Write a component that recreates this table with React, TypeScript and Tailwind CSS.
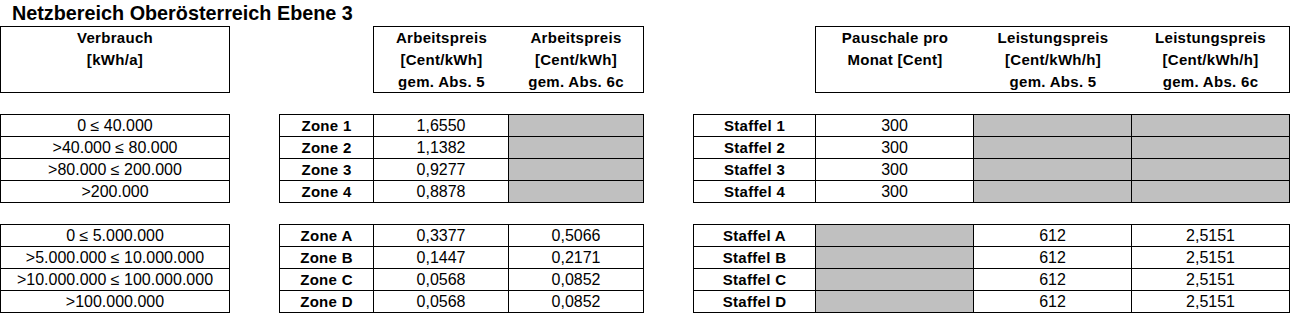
import React from 'react';

type Cell = { text?: string; bold?: boolean; gray?: boolean };

const GRAY = 'bg-[#c0c0c0]';

const groups = [
  {
    usage: ['0 ≤ 40.000', '>40.000 ≤ 80.000', '>80.000 ≤ 200.000', '>200.000'],
    zones: ['Zone 1', 'Zone 2', 'Zone 3', 'Zone 4'],
    work5: ['1,6550', '1,1382', '0,9277', '0,8878'],
    work6c: [null, null, null, null],
    staffel: ['Staffel 1', 'Staffel 2', 'Staffel 3', 'Staffel 4'],
    flat: ['300', '300', '300', '300'],
    power5: [null, null, null, null],
    power6c: [null, null, null, null],
  },
  {
    usage: ['0 ≤ 5.000.000', '>5.000.000 ≤ 10.000.000', '>10.000.000 ≤ 100.000.000', '>100.000.000'],
    zones: ['Zone A', 'Zone B', 'Zone C', 'Zone D'],
    work5: ['0,3377', '0,1447', '0,0568', '0,0568'],
    work6c: ['0,5066', '0,2171', '0,0852', '0,0852'],
    staffel: ['Staffel A', 'Staffel B', 'Staffel C', 'Staffel D'],
    flat: [null, null, null, null],
    power5: ['612', '612', '612', '612'],
    power6c: ['2,5151', '2,5151', '2,5151', '2,5151'],
  },
];

const BodyCell: React.FC<{ value: string | null; width: string; bold?: boolean; first?: boolean }> = ({
  value,
  width,
  bold,
  first,
}) => (
  <div
    className={`${width} h-full text-center whitespace-nowrap ${first ? '' : 'border-l border-black'} ${
      value === null ? GRAY : ''
    } ${bold ? 'font-bold text-[15px] tracking-[0.3px] leading-[21px]' : 'text-[16px] leading-[22px]'}`}
  >
    {value}
  </div>
);

const Box: React.FC<{ width: string; className?: string; rows: (string | null)[][]; widths: string[]; boldCol?: number }> = ({
  width,
  className,
  rows,
  widths,
  boldCol,
}) => (
  <div className={`${width} border border-black ${className ?? ''}`}>
    {rows.map((row, i) => (
      <div key={i} className={`flex h-[21px] ${i > 0 ? 'border-t border-black h-[22px]' : ''}`}>
        {row.map((v, j) => (
          <BodyCell key={j} value={v} width={widths[j]} bold={boldCol === j} first={j === 0} />
        ))}
      </div>
    ))}
  </div>
);

const HeadCol: React.FC<{ width: string; lines: string[] }> = ({ width, lines }) => (
  <div className={`${width} text-center font-bold text-[15px] tracking-[0.3px] leading-[22px] whitespace-nowrap`}>
    {lines.map((l) => (
      <div key={l}>{l}</div>
    ))}
  </div>
);

export default function App() {
  return (
    <div className="w-[1291px] h-[314px] bg-white text-black font-['Liberation_Sans',Arial,sans-serif] overflow-hidden">
      <div className="h-[26px] leading-[26px] pl-[12px] text-[19.8px] font-bold">Netzbereich Oberösterreich Ebene 3</div>

      <div className="flex h-[67px]">
        <div className="w-[230px] border border-black flex">
          <HeadCol width="w-[228px]" lines={['Verbrauch', '[kWh/a]']} />
        </div>
        <div className="w-[271px] ml-[143px] border border-black flex">
          <HeadCol width="w-[135px]" lines={['Arbeitspreis', '[Cent/kWh]', 'gem. Abs. 5']} />
          <HeadCol width="w-[134px]" lines={['Arbeitspreis', '[Cent/kWh]', 'gem. Abs. 6c']} />
        </div>
        <div className="w-[475px] ml-[171px] border border-black flex">
          <HeadCol width="w-[158px]" lines={['Pauschale pro', 'Monat [Cent]']} />
          <HeadCol width="w-[158px]" lines={['Leistungspreis', '[Cent/kWh/h]', 'gem. Abs. 5']} />
          <HeadCol width="w-[157px]" lines={['Leistungspreis', '[Cent/kWh/h]', 'gem. Abs. 6c']} />
        </div>
      </div>

      {groups.map((g, gi) => (
        <div key={gi} className="flex mt-[21px]">
          <Box width="w-[230px]" rows={g.usage.map((u) => [u])} widths={['w-[228px]']} />
          <Box
            width="w-[365px]"
            className="ml-[49px]"
            rows={g.zones.map((z, i) => [z, g.work5[i], g.work6c[i]])}
            widths={['w-[93px]', 'w-[135px]', 'w-[135px]']}
            boldCol={0}
          />
          <Box
            width="w-[597px]"
            className="ml-[49px]"
            rows={g.staffel.map((s, i) => [s, g.flat[i], g.power5[i], g.power6c[i]])}
            widths={['w-[121px]', 'w-[158px]', 'w-[158px]', 'w-[158px]']}
            boldCol={0}
          />
        </div>
      ))}
    </div>
  );
}
